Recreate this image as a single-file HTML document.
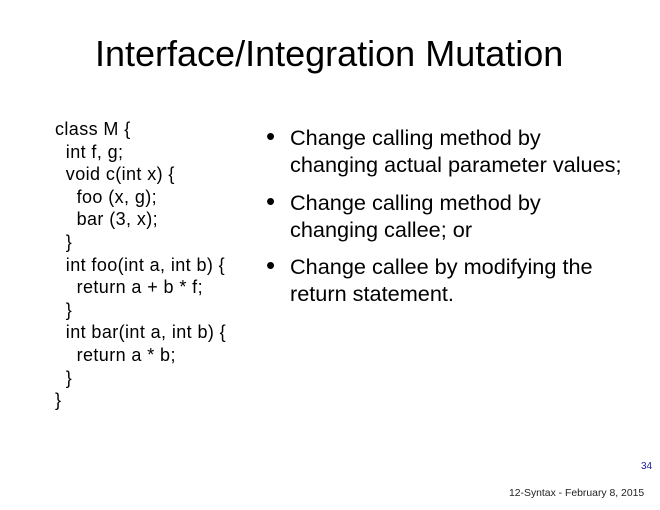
<!DOCTYPE html>
<html><head><style>
body{margin:0;width:660px;height:510px;background:#fff;position:relative;overflow:hidden;font-family:"Liberation Sans",sans-serif;color:#000}
.t{position:absolute;left:95px;top:33px;font-size:36px;letter-spacing:0px;white-space:nowrap}
.code{position:absolute;left:55px;top:118px;font-size:18px;line-height:22.6px;letter-spacing:0.4px;white-space:pre}
.b{position:absolute;left:266px;font-size:21.7px;line-height:27px;white-space:nowrap}
.b span{position:absolute;left:0;top:-1px;font-size:26px}
.b div{margin-left:24px}
.pg{position:absolute;left:641px;top:461px;font-size:10px;color:#1a1aa0}
.ft{position:absolute;left:509px;top:488px;font-size:10.4px;color:#222}
</style></head><body>
<div class="t">Interface/Integration Mutation</div>
<div class="code">class M {
  int f, g;
  void c(int x) {
    foo (x, g);
    bar (3, x);
  }
  int foo(int a, int b) {
    return a + b * f;
  }
  int bar(int a, int b) {
    return a * b;
  }
}</div>
<div class="b" style="top:124px"><span>•</span><div>Change calling method by<br>changing actual parameter values;</div></div>
<div class="b" style="top:189px"><span>•</span><div>Change calling method by<br>changing callee; or</div></div>
<div class="b" style="top:253px"><span>•</span><div>Change callee by modifying the<br>return statement.</div></div>
<div class="pg">34</div>
<div class="ft">12-Syntax - February 8, 2015</div>
</body></html>
